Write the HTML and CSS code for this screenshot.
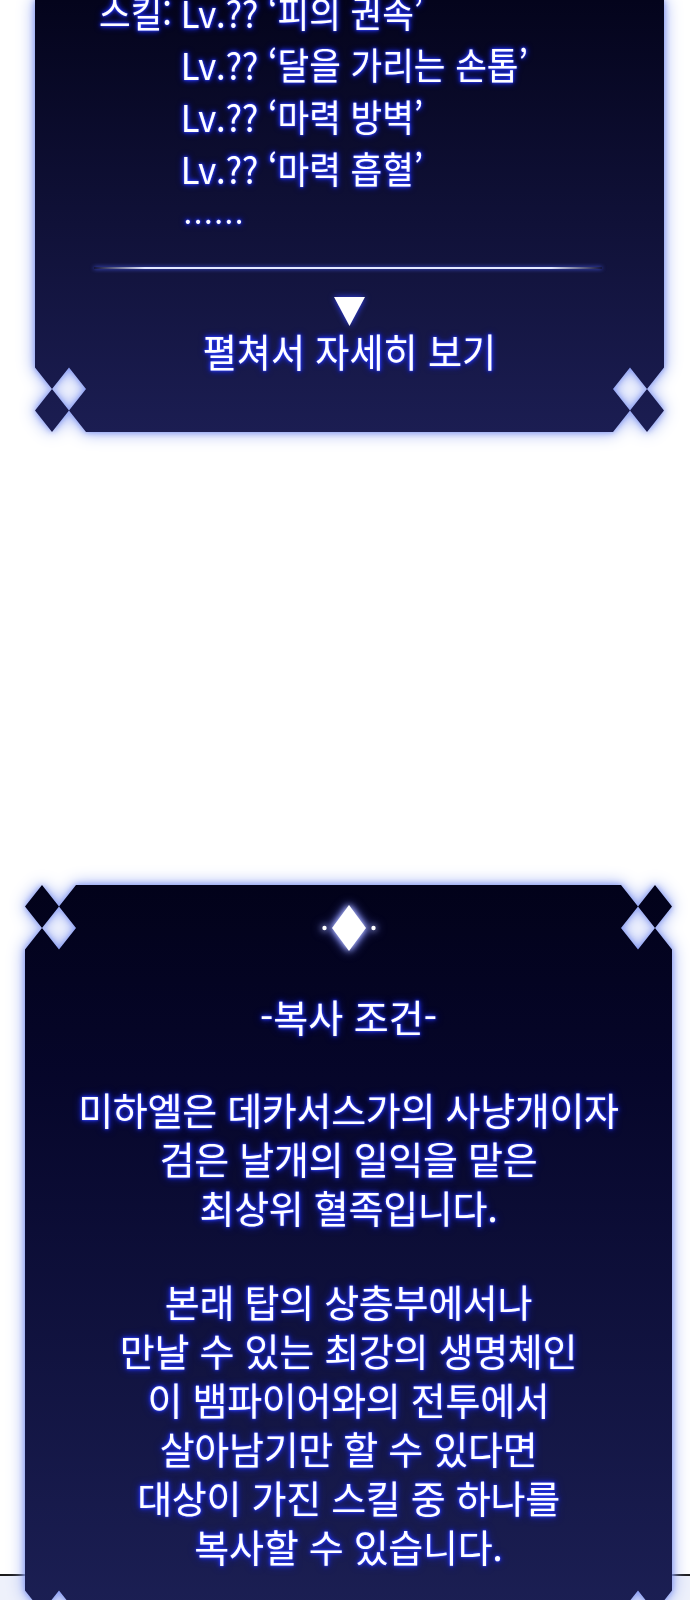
FILE: index.html
```html
<!DOCTYPE html>
<html lang="ko">
<head>
<meta charset="utf-8">
<title>스킬 정보</title>
<link rel="stylesheet" href="styles.css">
</head>
<body>
<div class="page">

  <section class="panel panel-end">
    <div class="panel-body">
      <div class="skills glow">
        <span class="skills-label">스킬:</span>
        <ul class="skills-list">
          <li>Lv.?? ‘피의 권속’</li>
          <li>Lv.?? ‘달을 가리는 손톱’</li>
          <li>Lv.?? ‘마력 방벽’</li>
          <li>Lv.?? ‘마력 흡혈’</li>
          <li class="more">……</li>
        </ul>
      </div>
      <hr class="divider">
      <div class="expand">
        <svg class="expand-arrow" width="31" height="29" viewBox="0 0 31 29">
          <polygon points="0,0 31,0 15.5,29" fill="#fff"/>
        </svg>
        <span class="expand-label glow">펼쳐서 자세히 보기</span>
      </div>
    </div>
  </section>

  <section class="panel panel-full">
    <div class="panel-body">
      <svg class="sparkle" width="60" height="50" viewBox="0 0 60 50">
        <polygon points="30,2 47,25 30,48 13,25" fill="#fff"/>
        <circle cx="5.5" cy="25" r="2.2" fill="#fff"/>
        <circle cx="54.5" cy="25" r="2.2" fill="#fff"/>
      </svg>
      <h2 class="cond-title glow">-복사 조건-</h2>
      <p class="cond-text glow">미하엘은 데카서스가의 사냥개이자<br>검은 날개의 일익을 맡은<br>최상위 혈족입니다.</p>
      <p class="cond-text glow">본래 탑의 상층부에서나<br>만날 수 있는 최강의 생명체인<br>이 뱀파이어와의 전투에서<br>살아남기만 할 수 있다면<br>대상이 가진 스킬 중 하나를<br>복사할 수 있습니다.</p>
    </div>
  </section>

</div>
</body>
</html>
```

FILE: styles.css
```css
*{ box-sizing:border-box; }
body{
  margin:0;
  font-family:"Noto Sans CJK KR", "Noto Sans", sans-serif;
  color:#fff;
  background:linear-gradient(#fff 1574px, #1b1b1b 1574px, #1b1b1b 1576px, #eef1fb 1576px);
}
.page{ width:690px; }

/* window frame: glow drawn around the clipped body */
.panel{ filter:drop-shadow(0 0 3px #7d91f0) drop-shadow(0 0 8px #9fb0f4); }
.panel-body{ overflow:hidden; }
.glow{ text-shadow:0 0 1px #4c5cff, 0 0 3px #2c3cff, 0 0 5px #2230f0, 0 0 8px #1a26d0; }

/* only the lower corners are shown on the first frame */
.panel-end{ margin:0 26px 0 35px; }
.panel-end .panel-body{
  padding-bottom:59px;
  background:linear-gradient(#04041c, #1b1d52);
  clip-path:polygon(evenodd,
    0 0, 100% 0,
    100% calc(100% - 64.5px),
    calc(100% - 17px) calc(100% - 43px),
    calc(100% - 34px) calc(100% - 64.5px),
    calc(100% - 51px) calc(100% - 43px),
    calc(100% - 34px) calc(100% - 21.5px),
    calc(100% - 17px) calc(100% - 43px),
    100% calc(100% - 21.5px),
    calc(100% - 17px) 100%,
    calc(100% - 34px) calc(100% - 21.5px),
    calc(100% - 51px) 100%,
    51px 100%,
    34px calc(100% - 21.5px),
    17px 100%,
    0 calc(100% - 21.5px),
    17px calc(100% - 43px),
    34px calc(100% - 64.5px),
    51px calc(100% - 43px),
    34px calc(100% - 21.5px),
    17px calc(100% - 43px),
    0 calc(100% - 64.5px));
}

.panel-full{ margin:453px 18px 0 25px; }
.panel-full .panel-body{
  padding:18px 0 85px;
  text-align:center;
  background:linear-gradient(#02021a 0%, #06062a 25%, #1d2157 100%);
  clip-path:polygon(evenodd,
    51px 0, calc(100% - 51px) 0,
    calc(100% - 34px) 21.5px,
    calc(100% - 17px) 0,
    100% 21.5px,
    calc(100% - 17px) 43px,
    calc(100% - 34px) 64.5px,
    calc(100% - 51px) 43px,
    calc(100% - 34px) 21.5px,
    calc(100% - 17px) 43px,
    100% 64.5px,
    100% calc(100% - 64.5px),
    calc(100% - 17px) calc(100% - 43px),
    calc(100% - 34px) calc(100% - 64.5px),
    calc(100% - 51px) calc(100% - 43px),
    calc(100% - 34px) calc(100% - 21.5px),
    calc(100% - 17px) calc(100% - 43px),
    100% calc(100% - 21.5px),
    calc(100% - 17px) 100%,
    calc(100% - 34px) calc(100% - 21.5px),
    calc(100% - 51px) 100%,
    51px 100%,
    34px calc(100% - 21.5px),
    17px 100%,
    0 calc(100% - 21.5px),
    17px calc(100% - 43px),
    34px calc(100% - 64.5px),
    51px calc(100% - 43px),
    34px calc(100% - 21.5px),
    17px calc(100% - 43px),
    0 calc(100% - 64.5px),
    0 64.5px,
    17px 43px,
    34px 64.5px,
    51px 43px,
    34px 21.5px,
    17px 43px,
    0 21.5px,
    17px 0,
    34px 21.5px);
}

/* skill list, set a little narrower than the stock face */
.skills{
  display:grid;
  grid-template-columns:88px auto;
  margin-top:-14px;
  padding-left:64px;
  font-size:37px;
  line-height:52px;
  transform:scaleX(.93);
  transform-origin:64px 0;
}
.skills-list{ margin:0; padding:0; list-style:none; }
.skills-list .more{ padding-left:2px; font-size:33px; }

.divider{
  width:508px;
  height:2px;
  margin:21px 0 0 59px;
  border:0;
  background:linear-gradient(90deg, rgba(220,228,255,0), #e3e8ff 10%, #e3e8ff 90%, rgba(220,228,255,0));
  box-shadow:0 0 4px #4d60ff;
}

.expand{
  display:flex;
  flex-direction:column;
  align-items:center;
  margin-top:28px;
}
.expand-arrow{ display:block; filter:drop-shadow(0 0 3px #3646ff); }
.expand-label{ margin-top:1px; font-size:39px; line-height:46px; transform:scaleX(.95); }

/* copy condition */
.sparkle{ display:block; margin:0 auto; filter:drop-shadow(0 0 3px #c9cfff) drop-shadow(0 0 5px #6b78ff); }
.cond-title{
  margin:39px 0 0;
  font-size:38px;
  font-weight:400;
  line-height:48px;
}
.cond-text{
  margin:44px 0 0;
  font-size:38px;
  line-height:49px;
  letter-spacing:-.3px;
}
.cond-text + .cond-text{ margin-top:45px; }
```
